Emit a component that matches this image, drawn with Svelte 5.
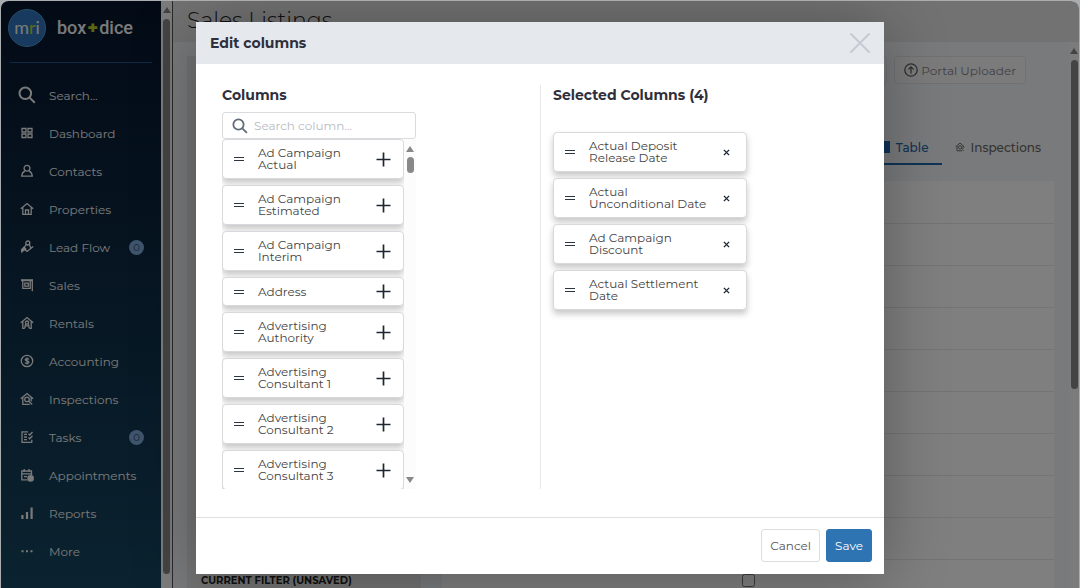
<script lang="ts">
  type NavItem = { label: string; icon: string; badge?: number };

  const nav: NavItem[] = [
    { label: 'Dashboard', icon: 'grid' },
    { label: 'Contacts', icon: 'person' },
    { label: 'Properties', icon: 'house' },
    { label: 'Lead Flow', icon: 'lead', badge: 0 },
    { label: 'Sales', icon: 'sign' },
    { label: 'Rentals', icon: 'rental' },
    { label: 'Accounting', icon: 'dollar' },
    { label: 'Inspections', icon: 'inspect' },
    { label: 'Tasks', icon: 'tasks', badge: 0 },
    { label: 'Appointments', icon: 'calendar' },
    { label: 'Reports', icon: 'bars' },
    { label: 'More', icon: 'dots' }
  ];

  let available = [
    'Ad Campaign Actual',
    'Ad Campaign Estimated',
    'Ad Campaign Interim',
    'Address',
    'Advertising Authority',
    'Advertising Consultant 1',
    'Advertising Consultant 2',
    'Advertising Consultant 3'
  ];

  let selected = [
    'Actual Deposit Release Date',
    'Actual Unconditional Date',
    'Ad Campaign Discount',
    'Actual Settlement Date'
  ];

  const rows = Array.from({ length: 10 }, (_, i) => i);

  let query = '';
  let open = true;

  $: matches = available.filter((c) => c.toLowerCase().includes(query.trim().toLowerCase()));

  function add(name: string) {
    available = available.filter((c) => c !== name);
    selected = [...selected, name];
  }

  function remove(name: string) {
    selected = selected.filter((c) => c !== name);
    available = [...available, name].sort();
  }

  function close() {
    open = false;
  }
</script>

{#snippet icon(name: string)}
  <svg class="icon" viewBox="0 0 14 14" aria-hidden="true">
    {#if name === 'grid'}
      <path d="M2 2.5h4v3.5H2zM8 2.5h4v3.5H8zM2 8h4v3.5H2zM8 8h4v3.5H8z" />
    {:else if name === 'person'}
      <circle cx="7" cy="4.2" r="2.9" />
      <path d="M4.8 7.2C3 8 1.9 9.6 1.7 12.2h10.6C12.1 9.6 11 8 9.2 7.2" />
    {:else if name === 'house'}
      <path d="M.8 6.8 7 1.5l6.2 5.3M2.8 5.5v6.8h8.4V5.5M5.500 12V8h3v4" />
    {:else if name === 'lead'}
      <circle cx="7.8" cy="3" r="2" />
      <path d="M6.200 4.500 4.500 7M9.300 4.500 11 8.500M4.500 9.500 7 11.500 13.200 6.500" />
      <path class="solid" d="M.8 9.500 4.200 6l2.600 3.200-2.800 1.500-2.500 2.500z" />
    {:else if name === 'sign'}
      <path d="M12.300 2v11.200M2.800 2v8.300h7.400V3M4.800 5.200h3.500v3H4.800z" />
      <path class="solid" d="M1 1.200h12v2H1z" />
    {:else if name === 'rental'}
      <path d="M.8 6.8 7 1.500l6.200 5.300M2.800 5.500v6.800h2M11.200 5.500v6.800h-2" />
      <circle cx="7" cy="6.600" r="1.600" />
      <path d="M5.600 8 4.800 12.200M8.400 8l.8 4.200M5.200 9.800h3.600" />
    {:else if name === 'dollar'}
      <circle cx="7" cy="7" r="5.700" />
      <path d="M8.900 5.300C8.400 4.600 5.200 4.300 5.200 5.800c0 1.600 3.700.8 3.700 2.400 0 1.500-3.100 1.400-3.900.4M7 3.500v7" />
    {:else if name === 'inspect'}
      <path d="M.8 6.800 7 1.500l6.200 5.300M2.800 5.500v6.800h7M11.200 5.500v4" />
      <circle cx="7" cy="7.400" r="2.300" />
      <path d="m8.700 9.100 3.500 3.400" />
    {:else if name === 'tasks'}
      <path d="M8 1.800H2v10.600h9.800M4 4.300h3M4 7h3M4 9.700h3M8.500 3.800l1.200 1.200 2.800-3M8.500 7.500l1.200 1.200 2.800-3M11.800 9.800v2.600" />
    {:else if name === 'calendar'}
      <path d="M7.500 11.800H1.800V3h9.700v4M1.800 5.800h9.700M4.200 1v3M9 1v3M4 8.600h3" />
      <circle class="solid" cx="10.600" cy="10.400" r="3.300" />
    {:else if name === 'bars'}
      <path class="solid" d="M1.300 9h2.200v4H1.300zM5.900 6h2.200v7H5.900zM10.500 1.500h2.200V13h-2.200z" />
    {:else if name === 'dots'}
      <path class="solid" d="M1.500 6.200h2v2h-2zM6 6.200h2v2H6zM10.500 6.200h2v2h-2z" />
    {:else if name === 'upload'}
      <circle cx="7" cy="7" r="6.200" />
      <path d="M7 10.500V4M4.400 6.400 7 3.800l2.600 2.600" />
    {:else if name === 'table'}
      <path class="solid" d="M0 1h14v12H0z" />
    {/if}
  </svg>
{/snippet}

{#snippet lens()}
  <svg class="lens" viewBox="0 0 18 18" aria-hidden="true">
    <circle cx="7.300" cy="7.300" r="5.800" />
    <path d="m11.600 11.600 5.200 5.200" />
  </svg>
{/snippet}

<div class="app">
  <nav class="sidebar">
    <a class="brand" href="#home">
      <span class="logo">m<i>r</i>i</span>
      <span class="name">box<b>+</b>dice</span>
    </a>
    <ul>
      <li>
        <a class="search-link" href="#search">
          <span class="slot">{@render lens()}</span>
          Search...
        </a>
      </li>
      {#each nav as item}
        <li>
          <a href="#{item.icon}">
            <span class="slot">{@render icon(item.icon)}</span>
            {item.label}
            {#if item.badge !== undefined}
              <span class="badge">{item.badge}</span>
            {/if}
          </a>
        </li>
      {/each}
    </ul>
  </nav>
  <div class="bar side-bar"><span class="up"></span><span class="thumb"></span></div>

  <main>
    <header><h1>Sales Listings</h1></header>
    <div class="content">
      <aside>
        <h2>CURRENT FILTER (UNSAVED)</h2>
      </aside>
      <section class="listing">
        <div class="toolbar">
          <button class="tool" aria-label="Export"></button>
          <button class="tool upload">{@render icon('upload')} Portal Uploader</button>
        </div>
        <div class="tabs">
          <a class="active" href="#table">{@render icon('table')} Table</a>
          <a href="#inspections">{@render icon('inspect')} Inspections</a>
        </div>
        <table>
          <tbody>
            {#each rows as row}
              <tr>
                <td class="lead"></td>
                <td><input type="checkbox" aria-label="Select row {row + 1}" /></td>
              </tr>
            {/each}
          </tbody>
        </table>
      </section>
      <div class="bar main-bar"><span class="up"></span><span class="thumb"></span></div>
    </div>
  </main>

  {#if open}
    <div class="overlay">
      <div class="modal" role="dialog" aria-modal="true" aria-labelledby="modal-title">
        <div class="modal-head">
          <h2 id="modal-title">Edit columns</h2>
          <button class="close" on:click={close} aria-label="Close">
            <svg viewBox="0 0 22 22"><path d="m2 2 18 18M20 2 2 20" /></svg>
          </button>
        </div>

        <div class="modal-body">
          <!-- Available -->
          <div class="pane">
            <h3>Columns</h3>
            <div class="picker">
              <label class="search">
                {@render lens()}
                <input type="text" placeholder="Search column..." aria-label="Search column" bind:value={query} />
              </label>
              <div class="scroller">
                <ul class="cards">
                  {#each matches as name (name)}
                    <li class="card">
                      <span class="grip"></span>
                      <span class="label">{name}</span>
                      <button class="add" on:click={() => add(name)} aria-label="Add {name}">
                        <svg viewBox="0 0 15 15"><path d="M7.500.5v14M.5 7.500h14" /></svg>
                      </button>
                    </li>
                  {/each}
                </ul>
                <div class="bar list-bar"><span class="up"></span><span class="thumb"></span><span class="down"></span></div>
              </div>
            </div>
          </div>

          <!-- Selected -->
          <div class="pane selected">
            <h3>Selected Columns ({selected.length})</h3>
            <ul class="cards">
              {#each selected as name (name)}
                <li class="card">
                  <span class="grip"></span>
                  <span class="label">{name}</span>
                  <button class="remove" on:click={() => remove(name)} aria-label="Remove {name}">
                    <svg viewBox="0 0 8 8"><path d="m1 1 6 6M7 1 1 7" /></svg>
                  </button>
                </li>
              {/each}
            </ul>
          </div>
        </div>

        <div class="modal-actions">
          <button class="btn" on:click={close}>Cancel</button>
          <button class="btn primary" on:click={close}>Save</button>
        </div>
      </div>
    </div>
  {/if}
</div>

<style>
  :global(body) {
    background: #a9adaf;
  }

  .app,
  .app :global(*) {
    box-sizing: border-box;
  }

  .app {
    position: relative;
    display: flex;
    height: 100vh;
    margin: 0 1px;
    border-top: 1px solid #a9adaf;
    border-radius: 8px 8px 0 0;
    overflow: hidden;
    font-family: Montserrat, Inter, sans-serif;
    font-size: 12px;
    color: #333;
    background: #f3f4f6;
  }

  h1, h2, h3, ul {
    margin: 0;
    padding: 0;
    list-style: none;
  }

  a {
    color: inherit;
    text-decoration: none;
  }

  button {
    font: inherit;
    cursor: pointer;
  }

  svg {
    flex: none;
    display: block;
    fill: none;
    stroke: currentColor;
  }

  .icon {
    width: 14px;
    height: 14px;
    stroke-width: 1.3;
  }

  .solid {
    fill: currentColor;
    stroke: none;
  }

  .lens {
    width: 18px;
    height: 18px;
    stroke-width: 2;
  }

  /* Sidebar */
  .sidebar {
    flex: none;
    width: 160px;
    overflow: hidden;
    color: #f4f4f4;
    background: linear-gradient(#06152c, #164560);
  }

  .brand {
    display: flex;
    align-items: center;
    gap: 11px;
    height: 62px;
    margin: 0 9px;
    padding-bottom: 7px;
    border-bottom: 1px solid #1e5286;
  }

  .logo {
    flex: none;
    width: 38px;
    height: 38px;
    margin-left: -2px;
    border: 1px solid #4b9ad0;
    border-radius: 50%;
    background: #3075bd;
    font: 400 18px/34px Lato, sans-serif;
    text-align: center;
  }

  .logo i {
    font-style: normal;
    color: #b6d433;
  }

  .name {
    display: flex;
    font: 500 18px/22px Roboto, sans-serif;
    white-space: nowrap;
  }

  .name b {
    margin: 0 1px;
    font-family: Montserrat, sans-serif;
    font-weight: 800;
    color: #b6cf1e;
  }

  .sidebar ul {
    padding-top: 13px;
  }

  .sidebar li a {
    display: flex;
    align-items: center;
    gap: 12px;
    height: 38px;
    padding: 0 17px 0 16px;
  }

  .slot {
    display: flex;
    justify-content: center;
    width: 20px;
  }

  .badge {
    width: 15px;
    height: 15px;
    margin-left: auto;
    border-radius: 50%;
    background: #7faadb;
    color: #34495f;
    font-size: 10px;
    line-height: 15px;
    text-align: center;
  }

  /* Scroll bars */
  .bar {
    display: flex;
    flex: none;
    flex-direction: column;
    align-items: center;
    width: 11px;
    background: #f8f8f8;
    color: #888;
  }

  .up,
  .down {
    border: 4px solid transparent;
    border-top: 0;
    border-bottom: 6px solid currentColor;
  }

  .down {
    margin-top: auto;
    border-top: 6px solid currentColor;
    border-bottom: 0;
  }

  .thumb {
    width: 7px;
    border-radius: 4px;
    background: currentColor;
  }

  .side-bar {
    width: 12px;
    padding: 6px 0 14px;
    gap: 6px;
    border-right: 1px solid #555;
  }

  .side-bar .thumb {
    flex: 1;
  }

  .main-bar {
    width: 10px;
    padding-top: 6px;
    gap: 6px;
    background: #f6f6f6;
  }

  .main-bar .thumb {
    height: 61%;
  }

  /* Page behind the dialog */
  main {
    display: flex;
    flex: 1;
    flex-direction: column;
    min-width: 0;
  }

  header {
    flex: none;
    height: 41px;
    padding: 4px 14px;
    background: #e4e5e7;
  }

  h1 {
    font-size: 22px;
    font-weight: 300;
    line-height: 32px;
    color: #222;
  }

  .content {
    display: flex;
    flex: 1;
    min-height: 0;
    padding-left: 14px;
  }

  aside {
    flex: none;
    display: flex;
    flex-direction: column;
    justify-content: flex-end;
    width: 234px;
    margin-top: 14px;
    padding-left: 14px;
    background: #e6e7e9;
  }

  aside h2 {
    font-size: 10px;
    line-height: 14px;
    color: #222;
  }

  .listing {
    flex: 1;
    min-width: 0;
    margin: 14px 15px 0 21px;
  }

  .toolbar {
    display: flex;
    justify-content: flex-end;
    gap: 7px;
    padding-right: 28px;
  }

  .tool {
    display: flex;
    align-items: center;
    gap: 3px;
    min-width: 100px;
    height: 28px;
    padding: 0 9px;
    border: 1px solid #e2e3e6;
    border-radius: 3px;
    background: #f6f7f9;
    color: #828488;
  }

  .upload .icon {
    color: #5c5e62;
  }

  .tabs {
    display: flex;
    justify-content: flex-end;
    height: 97px;
    padding-top: 47px;
  }

  .tabs a {
    display: flex;
    align-items: center;
    gap: 6px;
    height: 34px;
    padding: 0 13px;
    border-bottom: 2px solid transparent;
    color: #666;
    font-weight: 500;
  }

  .tabs a:not(.active) .icon {
    width: 10px;
  }

  .tabs .active {
    border-color: #1f66aa;
    color: #1f66aa;
  }

  table {
    width: 100%;
    border-collapse: collapse;
    background: #fff;
  }

  td {
    height: 42px;
    padding: 0;
    border-bottom: 1px solid #e8e8e8;
    vertical-align: middle;
  }

  td.lead {
    width: 49%;
  }

  td input {
    display: block;
    margin: 0;
    width: 13px;
    height: 13px;
  }

  /* Dialog */
  .overlay {
    position: absolute;
    inset: 0;
    display: flex;
    align-items: flex-start;
    justify-content: center;
    padding-top: 21px;
    background: rgba(0, 0, 0, 0.5);
  }

  .modal {
    width: 100%;
    max-width: 688px;
    background: #fff;
    box-shadow: 0 4px 60px rgba(0, 0, 0, 0.3);
  }

  .modal-head {
    display: flex;
    align-items: center;
    justify-content: space-between;
    height: 42px;
    padding: 0 13px 0 14px;
    background: #e5e8ed;
  }

  .modal-head h2,
  h3 {
    font-size: 14px;
    font-weight: 700;
    line-height: 20px;
    color: #2f2f3b;
  }

  .close {
    padding: 0;
    border: 0;
    background: none;
    color: #c5cad3;
  }

  .close svg {
    width: 22px;
    height: 22px;
    stroke-width: 2;
    stroke-linecap: round;
  }

  .modal-body {
    display: grid;
    grid-template-columns: 1fr 1fr;
    padding: 21px 0 28px;
  }

  .pane {
    padding-left: 26px;
  }

  .selected {
    padding-left: 12px;
    border-left: 1px solid #e8e8ea;
  }

  .selected .cards {
    max-width: 194px;
    padding-top: 27px;
  }

  .picker {
    max-width: 194px;
    padding-top: 7px;
  }

  .search {
    display: flex;
    align-items: center;
    gap: 6px;
    height: 27px;
    padding: 0 9px;
    border: 1px solid #d9dbde;
    border-radius: 3px;
    color: #5f6b78;
  }

  .search .lens {
    width: 16px;
    height: 16px;
  }

  .search input {
    flex: 1;
    min-width: 0;
    padding: 0;
    border: 0;
    outline: none;
    background: none;
    font: inherit;
    color: #333;
  }

  .search input::placeholder {
    color: #b9bbbf;
  }

  .scroller {
    display: flex;
    height: calc(100vh - 238px);
  }

  .scroller .cards {
    flex: 1;
    overflow-y: auto;
    scrollbar-width: none;
  }

  .list-bar {
    width: 12px;
    padding: 7px 0 6px;
    gap: 5px;
    background: #fcfcfc;
  }

  .list-bar .thumb {
    height: 16px;
  }

  .cards {
    display: flex;
    flex-direction: column;
    gap: 6px;
  }

  .card {
    flex: none;
    display: flex;
    align-items: center;
    padding: 6px 12px 6px 11px;
    border: 1px solid #d8d9dc;
    border-radius: 4px;
    background: #fff;
    box-shadow: 0 4px 6px rgba(0, 0, 0, 0.22);
    color: #444;
    font-size: 12px;
    line-height: 12px;
  }

  .grip {
    flex: none;
    width: 10px;
    height: 4px;
    margin-right: 14px;
    border: solid #2c3542;
    border-width: 1px 0;
  }

  .label {
    flex: 1;
    padding: 1px 0;
  }

  .add,
  .remove {
    padding: 0;
    border: 0;
    background: none;
    color: #1d2733;
  }

  .add svg {
    width: 15px;
    height: 15px;
    stroke-width: 1.7;
  }

  .remove {
    padding: 0 4px 0 14px;
  }

  .remove svg {
    width: 7px;
    height: 7px;
    stroke-width: 1.6;
  }

  .modal-actions {
    display: flex;
    justify-content: flex-end;
    gap: 6px;
    padding: 11px 12px 12px;
    border-top: 1px solid #dedfe1;
  }

  .btn {
    height: 33px;
    padding: 0 8px;
    border: 1px solid #dcdde0;
    border-radius: 3px;
    background: #fff;
    color: #555;
  }

  .primary {
    border-color: #2e73b2;
    background: #2e73b2;
    color: #fff;
  }
</style>
